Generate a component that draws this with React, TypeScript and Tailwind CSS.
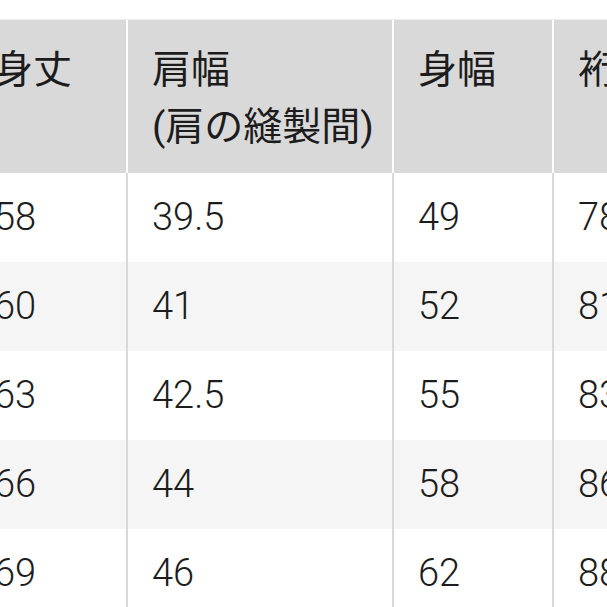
import React from 'react'

const headers = [['身丈'], ['肩幅', '(肩の縫製間)'], ['身幅'], ['裄丈']]

const rows = [
  ['58', '39.5', '49', '78'],
  ['60', '41', '52', '81'],
  ['63', '42.5', '55', '83'],
  ['66', '44', '58', '86'],
  ['69', '46', '62', '88'],
]

const cols = 'grid grid-cols-[158px_266px_160px_220px]'

export default function App() {
  return (
    <div
      className="w-[607px] h-[607px] overflow-hidden bg-white text-[#1c1c1c]"
      style={{ fontFamily: 'Roboto, "Noto Sans CJK JP", sans-serif' }}
    >
      <div className="pt-[19px] ml-[-30px] w-[804px]">
        {/* Header */}
        <div className={`${cols} border-t border-[#ebebeb] bg-[#d9d9d9]`}>
          {headers.map((lines, i) => (
            <div
              key={i}
              className="h-[153px] pl-6 pt-[22px] border-r-2 border-white text-[39px] leading-[57px] whitespace-nowrap"
            >
              {lines.map((l) => (
                <div key={l}>{l}</div>
              ))}
            </div>
          ))}
        </div>

        {/* Body */}
        {rows.map((row, r) => (
          <div key={r} className={`${cols} ${r % 2 === 1 ? 'bg-[#f5f5f5]' : 'bg-white'}`}>
            {row.map((v, i) => (
              <div
                key={i}
                className="h-[89px] flex items-center pl-6 border-r-2 border-[#d9d9d9] text-[38px] font-light"
              >
                {v}
              </div>
            ))}
          </div>
        ))}
      </div>
    </div>
  )
}
